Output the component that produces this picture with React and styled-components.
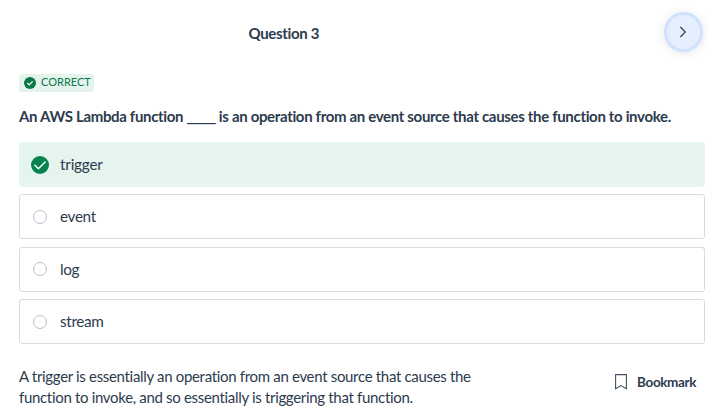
import React from "react";
import styled, { createGlobalStyle } from "styled-components";

const Global = createGlobalStyle`
  * { box-sizing: border-box; }
  body { margin: 0; background: #fff; color: #2d3b4e; font-family: Lato, sans-serif; font-size: 15px; overflow: hidden; font-variant-ligatures: none; }
`;
const Page = styled.main`
  display: flex; flex-direction: column; height: 419px; padding: 12px 14px 0 19px;
`;
const Header = styled.header`
  display: flex; align-items: center; justify-content: space-between; height: 40px; padding-left: 229.5px; padding-right: 2px;
`;
const Title = styled.h1`
  margin: 1px 0 0; font-size: 15px; line-height: 20px; font-weight: 700; letter-spacing: -0.33px;
`;
const NextButton = styled.button`
  display: grid; place-items: center; width: 39px; height: 40px; padding: 0 1px 0 0; border: 3px solid #d0e2fd; border-radius: 50%;
  background: #e6effe; box-shadow: 0 1px 9px rgba(70, 50, 40, 0.13); color: #3c4856;
`;
const Badge = styled.div`
  display: flex; align-items: center; align-self: flex-start; gap: 5px; width: 75px; height: 18px; margin-top: 22px; padding-left: 5px;
  border-radius: 3px; background: #e4f4ed; color: #0b7a4b; font-size: 11px; line-height: 16px;
`;
const BadgeText = styled.span`
  padding-bottom: 2px;
`;
const Prompt = styled.h2`
  margin: 13px 0 15px; font-size: 15px; line-height: 22px; font-weight: 700; white-space: nowrap; letter-spacing: -0.33px;
`;
const Blank = styled.span`
  letter-spacing: -1.3px; margin-right: 0.5px;
`;
const Options = styled.div`
  display: grid; gap: 7.4px; width: 686px;
`;
const Option = styled.label`
  display: flex; align-items: center; gap: 11px; height: 45px; padding: 0 0 1px 11px; border-radius: 3px;
  border: 1px solid ${(p) => (p.$correct ? "#e5f4ed" : "#d9dbe0")};
  background: ${(p) => (p.$correct ? "#e5f4ed" : "#fff")}; font-size: 15.3px; letter-spacing: ${(p) => (p.$correct ? "-0.2px" : "-0.35px")};
`;
const Marker = styled.span`
  display: grid; place-items: center; width: 18px; height: 18px; margin-top: 1px;
`;
const Ring = styled.span`
  width: 14px; height: 14px; border: 1px solid #b9c0cc; border-radius: 50%;
`;
const Footer = styled.footer`
  display: flex; justify-content: space-between; margin-top: 22px;
`;
const Explanation = styled.p`
  margin: 0; width: 480px; font-size: 15px; line-height: 21px; letter-spacing: -0.32px;
`;
const Bookmark = styled.button`
  display: flex; align-items: center; gap: 10px; height: 31px; padding: 0 9px 0 0; border: 0; background: none;
  color: #2d3b4e; font: 700 13.5px Lato, sans-serif; letter-spacing: -0.38px;
`;

function Check({ size, fill = "#088350", weight = 1.4, mark = "m3.4 8.8 4 4 7.2-7.2" }) {
  return (
    <svg width={size} height={size} viewBox="0 0 18 18" fill="none">
      <circle cx="9" cy="9" r="9" fill={fill} />
      <path d={mark} stroke="#fff" strokeWidth={weight} />
    </svg>
  );
}

export default function App() {
  return (
    <Page>
      <Global />
      <Header>
        <Title>Question 3</Title>
        <NextButton aria-label="Next question">
          <svg width="8" height="12" viewBox="0 0 8 12" fill="none"><path d="m1.3 1 5 5-5 5" stroke="currentColor" strokeWidth="1.3" /></svg>
        </NextButton>
      </Header>
      <Badge>
        <Check size={12} fill="#087a49" weight={1.8} mark="m5 9 2.8 2.8 5.2-5.2" />
        <BadgeText>CORRECT</BadgeText>
      </Badge>
      <Prompt>An AWS Lambda function <Blank>_____</Blank> is an operation from an event source that causes the function to invoke.</Prompt>
      <Options>
        {["trigger", "event", "log", "stream"].map((name, i) => (
          <Option key={name} $correct={i === 0}>
            <Marker>{i === 0 ? <Check size={18} /> : <Ring />}</Marker>{name}
          </Option>
        ))}
      </Options>
      <Footer>
        <Explanation>A trigger is essentially an operation from an event source that causes the<br />function to invoke, and so essentially is triggering that function.</Explanation>
        <Bookmark>
          <svg width="12" height="16" viewBox="0 0 12 16" fill="none"><path d="M.6.6h10.8v14.2L6 11.6.6 14.8z" stroke="#435166" strokeWidth="1.1" /></svg>
          Bookmark
        </Bookmark>
      </Footer>
    </Page>
  );
}
